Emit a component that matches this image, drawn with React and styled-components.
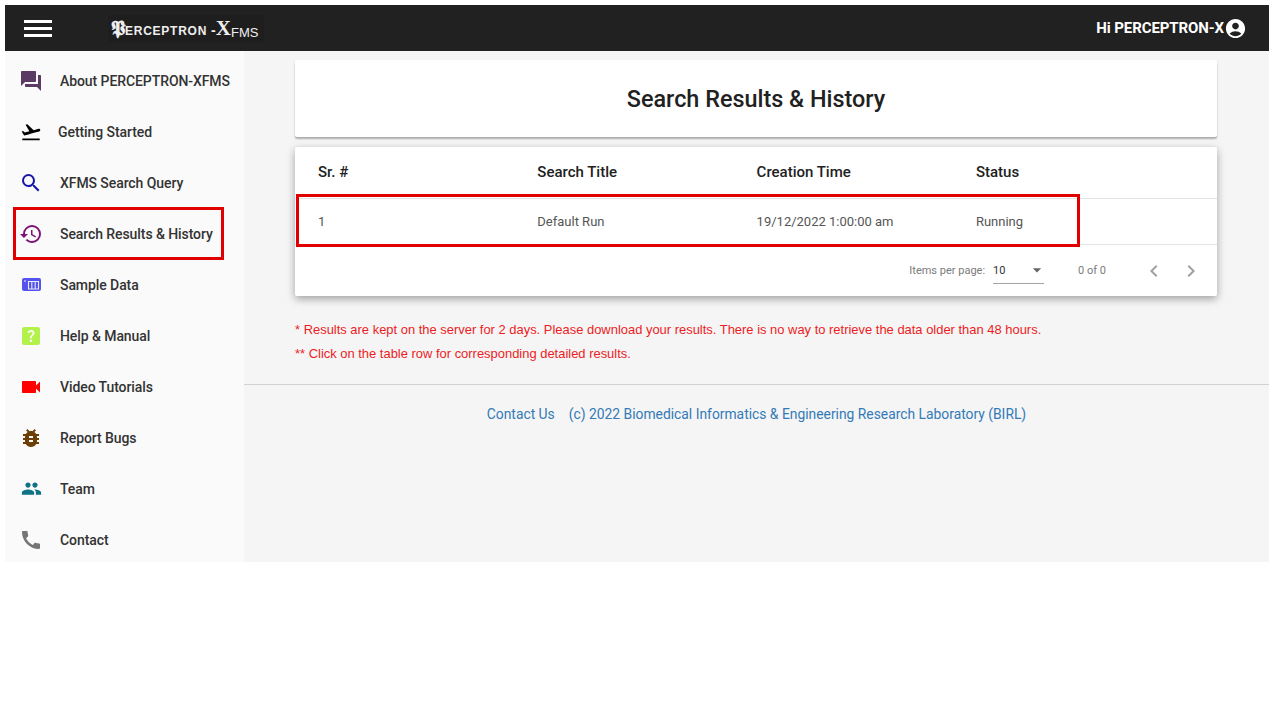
import React from 'react';
import styled, { createGlobalStyle } from 'styled-components';
import {
  MdQuestionAnswer,
  MdFlightTakeoff,
  MdSearch,
  MdHistory,
  MdHelpCenter,
  MdVideocam,
  MdBugReport,
  MdPeople,
  MdCall,
  MdAccountCircle,
  MdChevronLeft,
  MdChevronRight,
  MdArrowDropDown,
} from 'react-icons/md';

const GlobalStyle = createGlobalStyle`
  html, body {
    margin: 0;
    padding: 0;
    background: #fff;
    font-family: Roboto, "Liberation Sans", sans-serif;
  }
`;

const Page = styled.div`
  position: relative;
  width: 1264px;
  height: 557px;
  margin: 5px 0 0 5px;
  display: flex;
  flex-direction: column;
  background: #f5f5f5;
`;

const Toolbar = styled.header`
  height: 46px;
  flex: none;
  display: flex;
  align-items: center;
  justify-content: space-between;
  background: #212121;
  color: #fff;
  padding: 0 22px 0 19px;
`;

const ToolbarLeft = styled.div`
  display: flex;
  align-items: center;
`;

const MenuLines = styled.div`
  width: 28px;
  height: 17px;
  display: flex;
  flex-direction: column;
  justify-content: space-between;
  margin-right: 56px;

  span {
    display: block;
    height: 3px;
    background: #fff;
  }
`;

const Logo = styled.div`
  display: flex;
  align-items: baseline;
  height: 27px;
  box-sizing: border-box;
  padding: 3px 6px 0 3px;
  background: #1e1e1e;
  color: #eee;
  font-family: "Liberation Sans", sans-serif;
  font-size: 12px;
  font-weight: 700;
  letter-spacing: 0.75px;
`;

const LogoInitial = styled.span`
  font-family: "DejaVu Serif", "Liberation Serif", serif;
  font-size: 20px;
  font-weight: 700;
  line-height: 20px;
  letter-spacing: 0;
`;

const LogoX = styled.span`
  font-family: "Liberation Serif", serif;
  font-size: 21px;
  line-height: 20px;
  letter-spacing: 0;
`;

const LogoDash = styled.span`
  margin-left: 4px;
  font-size: 14px;
  letter-spacing: 0;
`;

const LogoSuffix = styled.span`
  font-size: 13px;
  font-weight: 400;
  letter-spacing: 0;
  transform: translateY(2px);
`;

const UserBox = styled.div`
  display: flex;
  align-items: center;
  font-size: 15px;
  font-weight: 700;
  letter-spacing: -0.1px;

  svg {
    display: block;
    margin-left: 0;
  }
`;

const Body = styled.div`
  flex: 1;
  display: flex;
  min-height: 0;
`;

const Sidebar = styled.nav`
  width: 239px;
  flex: none;
  background: #fafafa;
  padding-top: 4px;
  box-sizing: border-box;
`;

const NavItem = styled.div`
  height: 51px;
  display: flex;
  align-items: center;
  padding-left: 14px;
  font-size: 14px;
  font-weight: 500;
  letter-spacing: -0.08px;
  color: #333;
`;

const NavIcon = styled.span`
  width: 24px;
  height: 24px;
  display: flex;
  align-items: center;
  justify-content: center;
  margin-right: ${(p) => p.$gap || 17}px;
  color: ${(p) => p.$color};
`;

const Main = styled.main`
  flex: 1;
  min-width: 0;
  display: flex;
  flex-direction: column;
`;

const Content = styled.div`
  padding: 9px 52px 0 51px;
`;

const TitleCard = styled.div`
  height: 77px;
  display: flex;
  align-items: center;
  justify-content: center;
  background: #fff;
  box-shadow: 0 2px 2px rgba(0, 0, 0, 0.3);
  border-radius: 2px;
  margin-bottom: 10px;
`;

const Title = styled.h1`
  margin: 0;
  font-size: 23.4px;
  font-weight: 500;
  color: #212121;
`;

const TableCard = styled.div`
  background: #fff;
  box-shadow: 0 3px 8px rgba(0, 0, 0, 0.35);
  border-radius: 2px;
`;

const Row = styled.div`
  display: grid;
  grid-template-columns: repeat(4, 219.3px);
  align-items: center;
  padding: 0 23px;
  height: ${(p) => p.$height}px;
  border-bottom: 1px solid #e4e4e4;
`;

const HeadCell = styled.div`
  font-size: 15px;
  font-weight: 500;
  line-height: 17px;
  margin-bottom: 1px;
  color: #212121;
`;

const Cell = styled.div`
  font-size: 13px;
  color: #555;
`;

const Paginator = styled.div`
  height: 51px;
  display: flex;
  align-items: center;
  justify-content: flex-end;
  font-size: 11px;
  color: #7b7b7b;
  padding-right: 14px;
`;

const PageSelect = styled.div`
  width: 51px;
  height: 26px;
  margin-left: 8px;
  margin-right: 34px;
  display: flex;
  align-items: center;
  justify-content: space-between;
  box-sizing: border-box;
  border-bottom: 1px solid #a5a5a5;
  font-size: 11px;
  color: #333;

  svg {
    margin-right: -3px;
  }
`;

const PageArrows = styled.div`
  display: flex;
  align-items: center;
  gap: 13px;
  margin-left: 36px;
  color: #a0a0a0;
`;

const Notes = styled.div`
  margin-top: 22px;
  font-family: "Liberation Sans", Arial, sans-serif;
  font-size: 12.95px;
  line-height: 24px;
  color: #ed1c24;
`;

const Divider = styled.hr`
  margin: 18px 0 0;
  border: 0;
  border-top: 1px solid #d2d2d2;
`;

const Footer = styled.footer`
  display: flex;
  justify-content: center;
  gap: 14px;
  margin-top: 21px;
  font-size: 13.85px;
  line-height: 17px;
  color: #337ab7;
`;

const Highlight = styled.div`
  position: absolute;
  box-sizing: border-box;
  border: 3px solid #e00000;
  left: ${(p) => p.$x}px;
  top: ${(p) => p.$y}px;
  width: ${(p) => p.$w}px;
  height: ${(p) => p.$h}px;
`;

// the "sample data" glyph, no package has this one
const SampleIcon = () => (
  <svg width="19" height="13" viewBox="0 0 19 13">
    <rect width="19" height="13" rx="2" fill="#5353ee" />
    <path d="M3 2v2M6.5 3.5h10v7.5h-10zM9.8 3.5v7.5M13.2 3.5v7.5" stroke="#e8e8ff" strokeWidth="1.1" fill="none" />
  </svg>
);

const navItems = [
  { label: 'About PERCEPTRON-XFMS', color: '#5b3a63', icon: <MdQuestionAnswer size={24} /> },
  { label: 'Getting Started', color: '#000', icon: <MdFlightTakeoff size={22} />, gap: 15 },
  { label: 'XFMS Search Query', color: '#1616a8', icon: <MdSearch size={24} /> },
  { label: 'Search Results & History', color: '#7d1178', icon: <MdHistory size={24} /> },
  { label: 'Sample Data', color: '#5353ee', icon: <SampleIcon /> },
  { label: 'Help & Manual', color: '#b2f24b', icon: <MdHelpCenter size={24} /> },
  { label: 'Video Tutorials', color: '#f00', icon: <MdVideocam size={24} /> },
  { label: 'Report Bugs', color: '#6b3f06', icon: <MdBugReport size={24} /> },
  { label: 'Team', color: '#0f7285', icon: <MdPeople size={21} /> },
  { label: 'Contact', color: '#757575', icon: <MdCall size={24} /> },
];

function App() {
  return (
    <>
      <GlobalStyle />
      <Page>
        <Toolbar>
          <ToolbarLeft>
            <MenuLines>
              <span />
              <span />
              <span />
            </MenuLines>
            <Logo>
              <LogoInitial>𝕻</LogoInitial>
              ERCEPTRON
              <LogoDash>-</LogoDash>
              <LogoX>X</LogoX>
              <LogoSuffix>FMS</LogoSuffix>
            </Logo>
          </ToolbarLeft>
          <UserBox>
            Hi PERCEPTRON-X
            <MdAccountCircle size={23} />
          </UserBox>
        </Toolbar>
        <Body>
          <Sidebar>
            {navItems.map((item) => (
              <NavItem key={item.label}>
                <NavIcon $color={item.color} $gap={item.gap}>
                  {item.icon}
                </NavIcon>
                {item.label}
              </NavItem>
            ))}
          </Sidebar>
          <Main>
            <Content>
              <TitleCard>
                <Title>Search Results &amp; History</Title>
              </TitleCard>
              <TableCard>
                <Row $height={51}>
                  <HeadCell>Sr. #</HeadCell>
                  <HeadCell>Search Title</HeadCell>
                  <HeadCell>Creation Time</HeadCell>
                  <HeadCell>Status</HeadCell>
                </Row>
                <Row $height={45}>
                  <Cell>1</Cell>
                  <Cell>Default Run</Cell>
                  <Cell>19/12/2022 1:00:00 am</Cell>
                  <Cell>Running</Cell>
                </Row>
                <Paginator>
                  Items per page:
                  <PageSelect>
                    10
                    <MdArrowDropDown size={20} color="#666" />
                  </PageSelect>
                  0 of 0
                  <PageArrows>
                    <MdChevronLeft size={24} />
                    <MdChevronRight size={24} />
                  </PageArrows>
                </Paginator>
              </TableCard>
              <Notes>
                <div>* Results are kept on the server for 2 days. Please download your results. There is no way to retrieve the data older than 48 hours.</div>
                <div>** Click on the table row for corresponding detailed results.</div>
              </Notes>
            </Content>
            <Divider />
            <Footer>
              <span>Contact Us</span>
              <span>(c) 2022 Biomedical Informatics &amp; Engineering Research Laboratory (BIRL)</span>
            </Footer>
          </Main>
        </Body>
        <Highlight $x={8} $y={202} $w={211} $h={53} />
        <Highlight $x={291} $y={189} $w={784} $h={53} />
      </Page>
    </>
  );
}

export default App;
